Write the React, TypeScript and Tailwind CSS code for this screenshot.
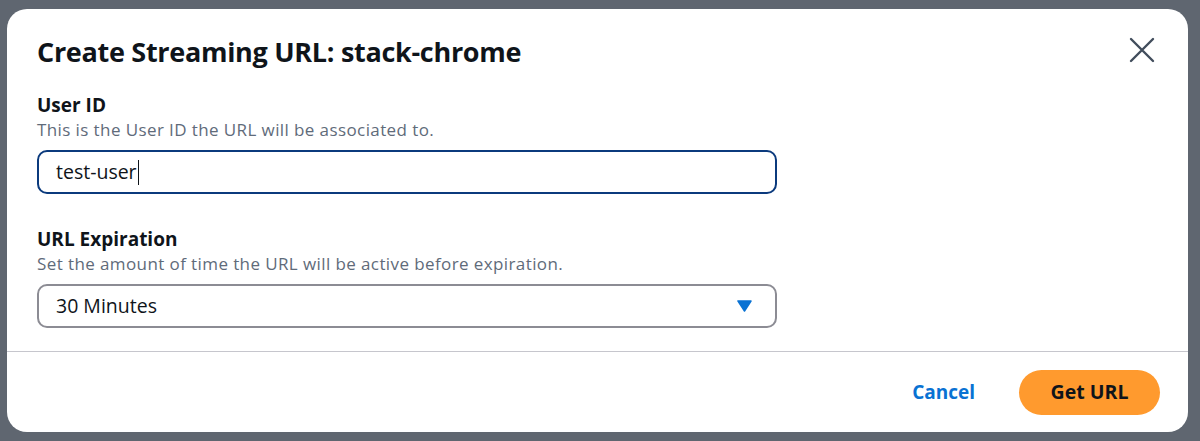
export default function App() {
  return (
    <div
      className="h-[441px] w-[1200px] bg-[#5f6670] pl-[7px] pr-[12px] pt-[9px] pb-[9px]"
      style={{ fontFamily: '"Open Sans", "Noto Sans", sans-serif' }}
    >
      <div className="flex h-full flex-col rounded-[20px] bg-white">
        <div className="flex items-start justify-between pl-[30px] pr-[33px] pt-[26px]">
          <h1 className="text-[27px] font-bold leading-[34px] tracking-[-0.3px] text-[#0f141a]">
            Create Streaming URL: stack-chrome
          </h1>
          <button type="button" aria-label="Close" className="mt-[2px] text-[#414d5c]">
            <svg width="26" height="26" viewBox="0 0 26 26" fill="none" stroke="currentColor" strokeWidth="2.4" strokeLinecap="round">
              <path d="M2 2 L24 24 M24 2 L2 24" />
            </svg>
          </button>
        </div>

        <div className="flex flex-col px-[30px] pt-[23px]">
          <label className="text-[19px] font-bold leading-[26px] text-[#0f141a]">User ID</label>
          <p className="text-[17px] leading-[24px] tracking-[0.4px] text-[#5f6b7a]">
            This is the User ID the URL will be associated to.
          </p>
          <div className="mt-[8px] flex h-[44px] w-[740px] items-center rounded-[10px] border-2 border-[#0b3a7d] px-[17px]">
            <span className="text-[19.5px] text-[#0f141a]">test-user</span>
            <span className="ml-[1px] h-[25px] w-[1px] bg-[#0f141a]" />
          </div>

          <label className="mt-[32px] text-[19px] font-bold leading-[26px] text-[#0f141a]">
            URL Expiration
          </label>
          <p className="text-[17px] leading-[24px] tracking-[0.4px] text-[#5f6b7a]">
            Set the amount of time the URL will be active before expiration.
          </p>
          <div className="mt-[8px] flex h-[44px] w-[740px] items-center justify-between rounded-[10px] border-2 border-[#8c8c94] pl-[17px] pr-[23px]">
            <span className="text-[19.5px] text-[#0f141a]">30 Minutes</span>
            <svg width="15" height="12" viewBox="0 0 15 12">
              <path d="M1 1 L14 1 L7.5 11 Z" fill="#0972d3" stroke="#0972d3" strokeLinejoin="round" strokeWidth="1.5" />
            </svg>
          </div>
        </div>

        <div className="mt-[23px] border-t border-[#c6c6cd]" />

        <div className="flex flex-1 items-center justify-end gap-[44px] pr-[28px]">
          <button type="button" className="text-[19px] font-bold text-[#0972d3]">
            Cancel
          </button>
          <button
            type="button"
            className="h-[45px] w-[141px] rounded-full bg-[#ff9a2e] text-[19.5px] font-bold text-[#0f141a]"
          >
            Get URL
          </button>
        </div>
      </div>
    </div>
  );
}
